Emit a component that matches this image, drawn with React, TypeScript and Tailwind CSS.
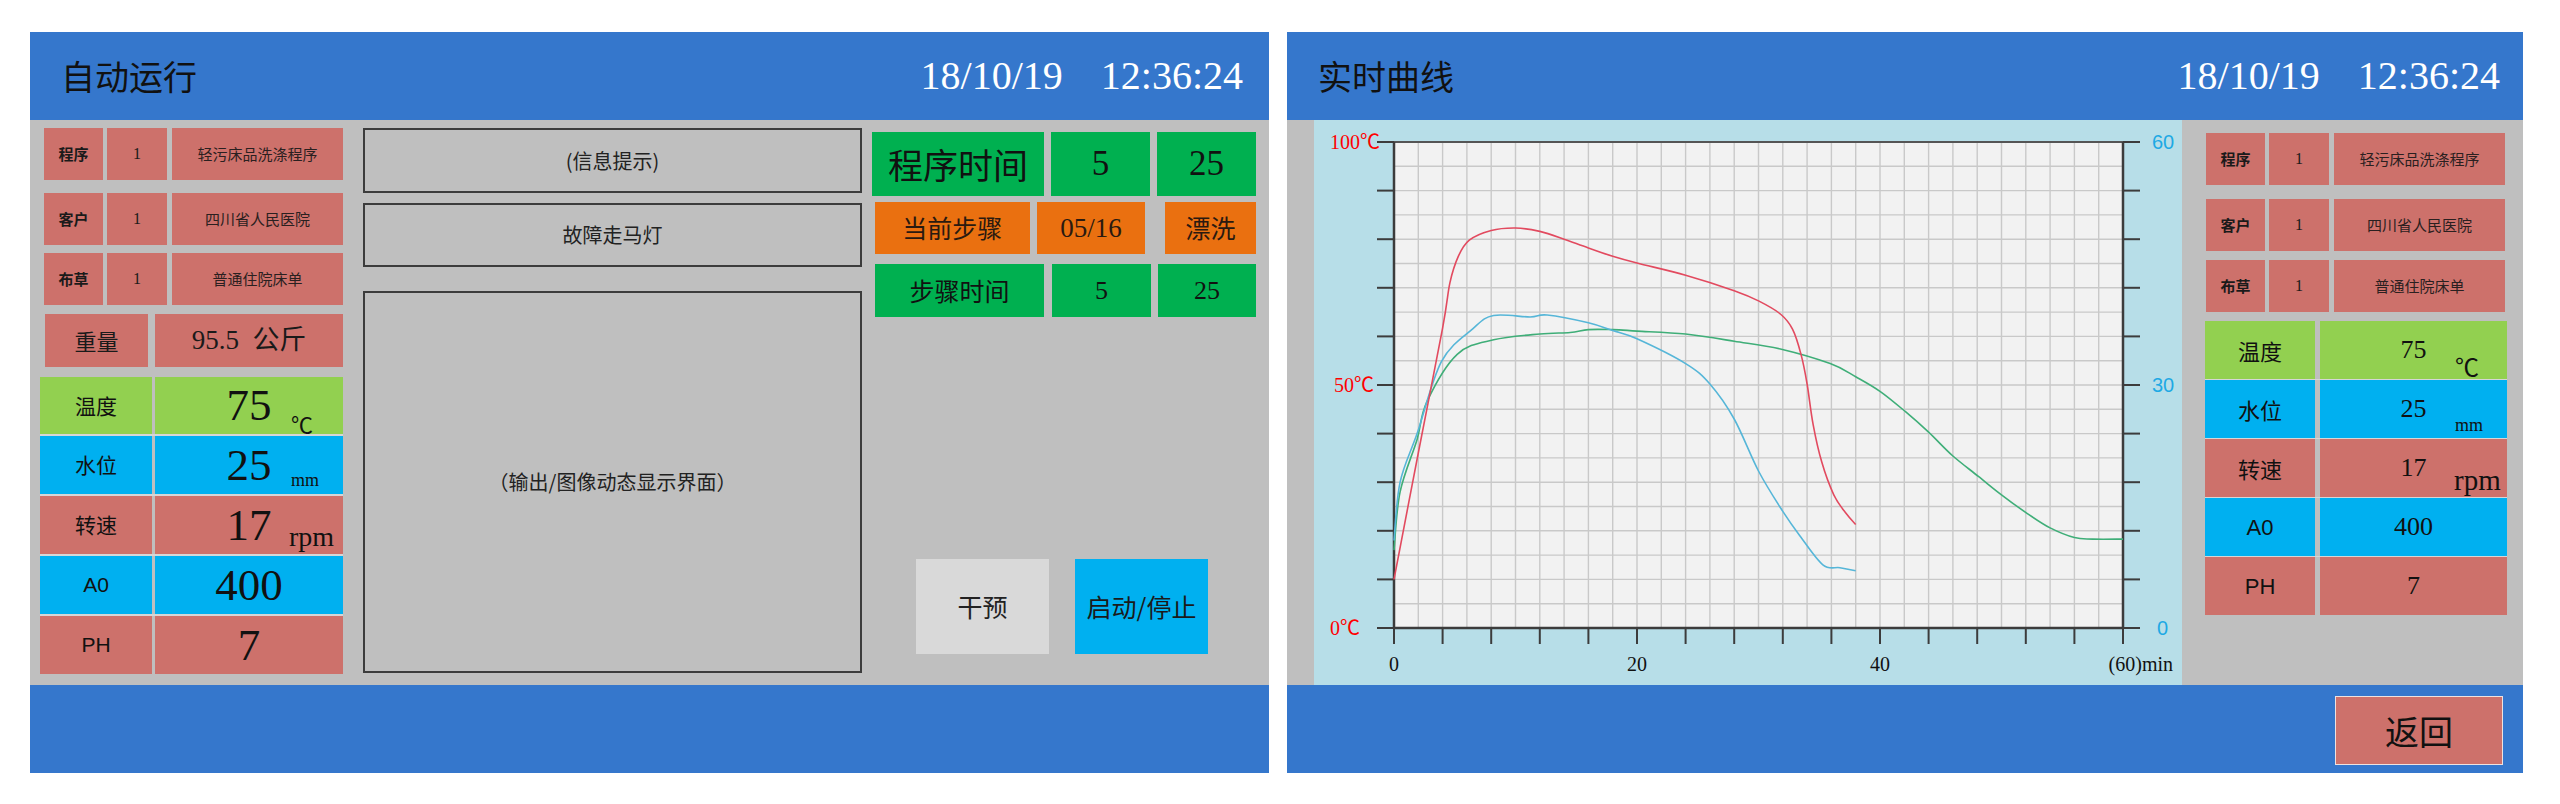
import React from "react";

const CJK = "font-['Noto_Sans_CJK_SC',sans-serif]";
const SERIF = "font-['Liberation_Serif','Noto_Sans_CJK_SC',serif]";
const SANS = "font-['Liberation_Sans','Noto_Sans_CJK_SC',sans-serif]";

type Pt = [number, number];

// plot frame inside the chart card (px)
const X0 = 80;
const Y0 = 22;
const X1 = 809;
const Y1 = 508;
const sx = (m: number) => X0 + (m / 60) * (X1 - X0);
const sy = (v: number) => Y1 - (v / 100) * (Y1 - Y0);

function smoothPath(pts: Pt[]) {
  const p = pts.map(([m, v]) => [sx(m), sy(v)]);
  let d = `M${p[0][0].toFixed(1)},${p[0][1].toFixed(1)}`;
  for (let i = 0; i < p.length - 1; i++) {
    const a = p[i - 1] || p[i];
    const b = p[i];
    const c = p[i + 1];
    const e = p[i + 2] || c;
    const c1x = b[0] + (c[0] - a[0]) / 6;
    const c1y = b[1] + (c[1] - a[1]) / 6;
    const c2x = c[0] - (e[0] - b[0]) / 6;
    const c2y = c[1] - (e[1] - b[1]) / 6;
    d += ` C${c1x.toFixed(1)},${c1y.toFixed(1)} ${c2x.toFixed(1)},${c2y.toFixed(1)} ${c[0].toFixed(1)},${c[1].toFixed(1)}`;
  }
  return d;
}

const temperature: Pt[] = [
  [0, 10], [2, 36], [4, 61.7], [4.6, 71], [5.3, 76.5], [6.2, 79.8], [8, 81.8], [10, 82.3],
  [12, 81.6], [14, 80], [16, 78.2], [18, 76.5], [20, 75.1], [24, 72.6], [28, 69.4],
  [30, 67.3], [31.8, 64.6], [32.8, 61.5], [33.5, 56.3], [34, 50.2], [34.5, 41.8],
  [35.2, 34.2], [36.2, 27.4], [37.2, 23.6], [38, 21.3],
];

const level: Pt[] = [
  [0, 18], [0.5, 30], [1.9, 40], [3.9, 54.8], [6.5, 61.6], [8.2, 64.3], [11.2, 64], [12.6, 64.4],
  [16, 62.8], [18, 61.2], [20, 59.5], [24, 54.4], [26, 50.2], [28, 43], [30, 32.3],
  [32, 24], [33.4, 19], [35.3, 13], [36.7, 12.4], [38, 11.8],
];

const speed: Pt[] = [
  [0, 16], [0.5, 28], [1.9, 38.8], [2.7, 46.5], [5.2, 56.3], [8.2, 59.3], [12, 60.5],
  [14.5, 60.8], [16, 61.4], [18, 61.4], [20, 61.1], [24, 60.5], [28, 59], [31.8, 57.4],
  [35.9, 54.4], [38, 51.7], [40, 48.7], [42.1, 44.5], [44, 40.3], [46, 35.4], [48.1, 31.2],
  [50, 27.4], [52.1, 23.6], [54, 20.6], [56, 18.6], [57.5, 18.3], [60, 18.3],
];

function Chart() {
  const vLines = Array.from({ length: 31 }, (_, i) => X0 + (i * (X1 - X0)) / 30);
  const hLines = Array.from({ length: 21 }, (_, j) => Y0 + (j * (Y1 - Y0)) / 20);
  const yTicks = Array.from({ length: 11 }, (_, j) => Y0 + (j * (Y1 - Y0)) / 10);
  const xTicks = Array.from({ length: 16 }, (_, i) => X0 + (i * (X1 - X0)) / 15);
  return (
    <svg width="868" height="565" viewBox="0 0 868 565" className="block">
      <rect x={X0} y={Y0} width={X1 - X0} height={Y1 - Y0} fill="#f2f2f2" />
      {vLines.map((x, i) => (
        <line key={`v${i}`} x1={x} y1={Y0} x2={x} y2={Y1} stroke="#c9c9c9" strokeWidth="1.4" />
      ))}
      {hLines.map((y, j) => (
        <line key={`h${j}`} x1={X0} y1={y} x2={X1} y2={y} stroke="#c9c9c9" strokeWidth="1.4" />
      ))}
      {yTicks.map((y, j) => (
        <g key={`t${j}`}>
          <line x1={63} y1={y} x2={X0} y2={y} stroke="#3c3c3c" strokeWidth="2" />
          <line x1={X1} y1={y} x2={826} y2={y} stroke="#3c3c3c" strokeWidth="2" />
        </g>
      ))}
      {xTicks.map((x, i) => (
        <line key={`b${i}`} x1={x} y1={Y1} x2={x} y2={524} stroke="#3c3c3c" strokeWidth="2" />
      ))}
      <line x1={X0} y1={Y0} x2={X1} y2={Y0} stroke="#555" strokeWidth="2" />
      <line x1={X0} y1={Y0} x2={X0} y2={Y1} stroke="#3c3c3c" strokeWidth="2.5" />
      <line x1={X1} y1={Y0} x2={X1} y2={Y1} stroke="#3c3c3c" strokeWidth="2.5" />
      <line x1={X0} y1={Y1} x2={X1} y2={Y1} stroke="#3c3c3c" strokeWidth="2.5" />

      <path d={smoothPath(speed)} fill="none" stroke="#3fae78" strokeWidth="1.6" />
      <path d={smoothPath(level)} fill="none" stroke="#56b6d8" strokeWidth="1.6" />
      <path d={smoothPath(temperature)} fill="none" stroke="#e24a5f" strokeWidth="1.6" />

      <g fill="#ff0000" fontSize="20" fontFamily="'Liberation Serif','Noto Sans CJK SC',serif">
        <text x="16" y="29">100℃</text>
        <text x="20" y="272">50℃</text>
        <text x="16" y="515">0℃</text>
      </g>
      <g fill="#1ea9e4" fontSize="20" fontFamily="'Liberation Sans',sans-serif">
        <text x="838" y="29">60</text>
        <text x="838" y="272">30</text>
        <text x="843" y="515">0</text>
      </g>
      <g fill="#111" fontSize="20" fontFamily="'Liberation Serif',serif" textAnchor="middle">
        <text x={sx(0)} y="551">0</text>
        <text x={sx(20)} y="551">20</text>
        <text x={sx(40)} y="551">40</text>
        <text x="859" y="551" textAnchor="end">(60)min</text>
      </g>
    </svg>
  );
}

function DateTime() {
  return (
    <div className={`flex gap-[38px] text-[40px] leading-none text-white ${SERIF}`}>
      <span>18/10/19</span>
      <span>12:36:24</span>
    </div>
  );
}

function InfoRow({ label, name, className }: { label: string; name: string; className: string }) {
  return (
    <div className={`flex h-[52px] ${className}`}>
      <div className={`w-[59px] bg-[#cd716b] flex items-center justify-center text-[15px] font-bold text-[#1a1a1a] ${CJK}`}>
        {label}
      </div>
      <div className={`w-[60px] ml-[4px] bg-[#cd716b] flex items-center justify-center text-[16px] text-[#1a1a1a] ${SERIF}`}>
        1
      </div>
      <div className={`w-[171px] ml-[5px] bg-[#cd716b] flex items-center justify-center text-[15px] text-[#2a2020] ${CJK}`}>
        {name}
      </div>
    </div>
  );
}

type Stat = { label: string; value: string; unit?: string; lbg: string; vbg: string; latin?: boolean };

const stats: Stat[] = [
  { label: "温度", value: "75", unit: "℃", lbg: "bg-[#92d050]", vbg: "bg-[#92d050]" },
  { label: "水位", value: "25", unit: "mm", lbg: "bg-[#00b0f0]", vbg: "bg-[#00b0f0]" },
  { label: "转速", value: "17", unit: "rpm", lbg: "bg-[#cd716b]", vbg: "bg-[#cd716b]" },
  { label: "A0", value: "400", lbg: "bg-[#00b0f0]", vbg: "bg-[#00b0f0]", latin: true },
  { label: "PH", value: "7", lbg: "bg-[#cd716b]", vbg: "bg-[#cd716b]", latin: true },
];

function LeftUnit({ unit }: { unit?: string }) {
  if (unit === "℃")
    return <span className={`absolute left-[136px] bottom-[0px] text-[22px] leading-none ${CJK}`}>℃</span>;
  if (unit === "mm")
    return <span className={`absolute left-[136px] bottom-[5px] text-[18px] leading-none ${SERIF}`}>mm</span>;
  if (unit === "rpm")
    return <span className={`absolute left-[134px] bottom-[3px] text-[28px] leading-none ${SERIF}`}>rpm</span>;
  return null;
}

function RightUnit({ unit }: { unit?: string }) {
  if (unit === "℃")
    return <span className={`absolute left-[135px] bottom-[1px] text-[24px] leading-none ${CJK}`}>℃</span>;
  if (unit === "mm")
    return <span className={`absolute left-[135px] bottom-[4px] text-[18px] leading-none ${SERIF}`}>mm</span>;
  if (unit === "rpm")
    return <span className={`absolute left-[134px] bottom-[2px] text-[29px] leading-none ${SERIF}`}>rpm</span>;
  return null;
}

function LeftPanel() {
  return (
    <section className="w-[1239px] h-[741px] flex flex-col">
      <header className="h-[88px] bg-[#3577cc] flex items-center justify-between pl-[31px] pr-[26px]">
        <h1 className={`text-[34px] leading-none text-[#111] ${CJK}`}>自动运行</h1>
        <DateTime />
      </header>

      <div className="h-[565px] bg-[#bfbfbf] flex pl-[10px]">
        {/* recipe, weight and live readings */}
        <div className="w-[303px] flex flex-col">
          <InfoRow className="mt-[8px] ml-[4px]" label="程序" name="轻污床品洗涤程序" />
          <InfoRow className="mt-[13px] ml-[4px]" label="客户" name="四川省人民医院" />
          <InfoRow className="mt-[8px] ml-[4px]" label="布草" name="普通住院床单" />
          <div className="flex h-[53px] mt-[9px] ml-[5px]">
            <div className={`w-[103px] bg-[#cd716b] flex items-center justify-center text-[22px] text-[#1a1a1a] ${CJK}`}>
              重量
            </div>
            <div className={`w-[188px] ml-[7px] bg-[#cd716b] flex items-center justify-center text-[27px] text-[#1a1a1a] ${SERIF}`}>
              95.5&nbsp;&nbsp;公斤
            </div>
          </div>
          <div className="mt-[10px] flex flex-col gap-[2px] bg-[#d6d6d6]">
            {stats.map((s, i) => (
              <div key={s.label} className={`flex gap-[3px] bg-[#bfbfbf] ${i === 0 ? "h-[57px]" : "h-[58px]"}`}>
                <div
                  className={`w-[112px] ${s.lbg} flex items-center justify-center text-[21px] text-[#111] ${s.latin ? SANS : CJK}`}
                >
                  {s.label}
                </div>
                <div className={`relative w-[188px] ${s.vbg} flex items-center justify-center text-[#111]`}>
                  <span className={`text-[45px] leading-none ${SERIF}`}>{s.value}</span>
                  <LeftUnit unit={s.unit} />
                </div>
              </div>
            ))}
          </div>
        </div>

        {/* message boxes */}
        <div className="w-[499px] ml-[20px] flex flex-col">
          <div className={`mt-[8px] h-[65px] border-2 border-[#3c3c3c] flex items-center justify-center text-[20px] text-[#222] ${CJK}`}>
            (信息提示)
          </div>
          <div className={`mt-[10px] h-[64px] border-2 border-[#3c3c3c] flex items-center justify-center text-[20px] text-[#222] ${CJK}`}>
            故障走马灯
          </div>
          <div className={`mt-[24px] h-[382px] border-2 border-[#3c3c3c] flex items-center justify-center text-[20px] text-[#222] ${CJK}`}>
            （输出/图像动态显示界面）
          </div>
        </div>

        {/* program timing and controls */}
        <div className="w-[384px] ml-[10px] flex flex-col">
          <div className="mt-[12px] h-[64px] flex">
            <div className={`w-[172px] bg-[#00b050] flex items-center justify-center text-[35px] text-[#111] ${CJK}`}>
              程序时间
            </div>
            <div className={`w-[99px] ml-[7px] bg-[#00b050] flex items-center justify-center text-[35px] text-[#111] ${SERIF}`}>
              5
            </div>
            <div className={`w-[99px] ml-[7px] bg-[#00b050] flex items-center justify-center text-[35px] text-[#111] ${SERIF}`}>
              25
            </div>
          </div>
          <div className="mt-[6px] h-[52px] ml-[3px] flex">
            <div className={`w-[155px] bg-[#ea7010] flex items-center justify-center text-[25px] text-[#2a1a10] ${CJK}`}>
              当前步骤
            </div>
            <div className={`w-[109px] ml-[7px] bg-[#ea7010] flex items-center justify-center text-[27px] text-[#2a1a10] ${SERIF}`}>
              05/16
            </div>
            <div className={`w-[91px] ml-[20px] bg-[#ea7010] flex items-center justify-center text-[25px] text-[#2a1a10] ${CJK}`}>
              漂洗
            </div>
          </div>
          <div className="mt-[10px] h-[53px] ml-[3px] flex">
            <div className={`w-[169px] bg-[#00b050] flex items-center justify-center text-[25px] text-[#111] ${CJK}`}>
              步骤时间
            </div>
            <div className={`w-[99px] ml-[8px] bg-[#00b050] flex items-center justify-center text-[26px] text-[#111] ${SERIF}`}>
              5
            </div>
            <div className={`w-[98px] ml-[7px] bg-[#00b050] flex items-center justify-center text-[26px] text-[#111] ${SERIF}`}>
              25
            </div>
          </div>
          <div className="mt-[242px] h-[95px] flex">
            <button className={`w-[133px] ml-[44px] bg-[#d9d9d9] flex items-center justify-center text-[25px] text-[#222] ${CJK}`}>
              干预
            </button>
            <button className={`w-[133px] ml-[26px] bg-[#00b0f0] flex items-center justify-center text-[25px] text-[#1a1a1a] ${CJK}`}>
              启动/停止
            </button>
          </div>
        </div>
      </div>

      <footer className="h-[88px] bg-[#3577cc]" />
    </section>
  );
}

function RightPanel() {
  return (
    <section className="w-[1236px] h-[741px] flex flex-col">
      <header className="h-[88px] bg-[#3577cc] flex items-center justify-between pl-[31px] pr-[23px]">
        <h1 className={`text-[34px] leading-none text-[#111] ${CJK}`}>实时曲线</h1>
        <DateTime />
      </header>

      <div className="h-[565px] bg-[#bfbfbf] flex pl-[27px]">
        <div className="w-[868px] h-[565px] bg-[#b7dee8]">
          <Chart />
        </div>

        <div className="w-[302px] ml-[23px] flex flex-col">
          <InfoRow className="mt-[13px] ml-[1px]" label="程序" name="轻污床品洗涤程序" />
          <InfoRow className="mt-[14px] ml-[1px]" label="客户" name="四川省人民医院" />
          <InfoRow className="mt-[9px] ml-[1px]" label="布草" name="普通住院床单" />
          <div className="mt-[9px] flex flex-col gap-[1px] bg-[#d6d6d6]">
            {stats.map((s) => (
              <div key={s.label} className="flex gap-[5px] h-[58px] bg-[#bfbfbf]">
                <div
                  className={`w-[110px] ${s.lbg} flex items-center justify-center text-[22px] text-[#111] ${s.latin ? SANS : CJK}`}
                >
                  {s.label}
                </div>
                <div className={`relative w-[187px] ${s.vbg} flex items-center justify-center text-[#111]`}>
                  <span className={`text-[26px] leading-none ${SERIF}`}>{s.value}</span>
                  <RightUnit unit={s.unit} />
                </div>
              </div>
            ))}
          </div>
        </div>
      </div>

      <footer className="h-[88px] bg-[#3577cc] flex justify-end items-start pt-[11px] pr-[20px]">
        <button
          className={`w-[168px] h-[69px] bg-[#cd716b] border border-[#eee2e0] flex items-center justify-center text-[34px] text-[#111] ${CJK}`}
        >
          返回
        </button>
      </footer>
    </section>
  );
}

export default function App() {
  return (
    <div className="w-[2560px] h-[804px] bg-white flex gap-[18px] pl-[30px] pt-[32px]">
      <LeftPanel />
      <RightPanel />
    </div>
  );
}
